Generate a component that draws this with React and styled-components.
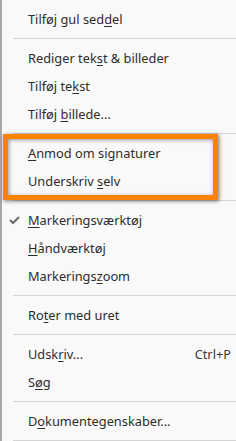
import React from "react";
import styled, { createGlobalStyle } from "styled-components";

const GlobalStyle = createGlobalStyle`
  html, body {
    margin: 0;
    padding: 0;
    background: #f9f9f9;
    overflow: hidden;
  }
`;

const Menu = styled.div`
  width: 236px;
  min-height: 441px;
  box-sizing: border-box;
  padding-top: 5px;
  background: #f9f9f9;
  border-left: 2px solid #a8a8a8;
  font-family: "Noto Sans", "Open Sans", sans-serif;
  font-size: 12.8px;
  color: #2d2d2d;
`;

const Item = styled.div`
  position: relative;
  display: flex;
  align-items: center;
  justify-content: space-between;
  height: 28px;
  padding: 0 5px 0 26px;
`;

const Key = styled.span`
  text-decoration: underline;
  text-underline-offset: 2px;
`;

const Shortcut = styled.span`
  color: #3a3a3a;
`;

const Separator = styled.div`
  height: 1px;
  margin: 5px 0 5px 11px;
  background: #d4d4d4;
`;

const Check = styled.svg`
  position: absolute;
  left: 7px;
  top: 50%;
  transform: translateY(-50%);
`;

const Highlight = styled.div`
  position: relative;

  &::after {
    content: "";
    position: absolute;
    left: 1px;
    right: 18px;
    top: -5px;
    bottom: -5px;
    border: 5px solid #fd8204;
    box-shadow: 1px 1px 4px rgba(0, 0, 0, 0.55),
      inset 1px 1px 4px rgba(0, 0, 0, 0.4);
    pointer-events: none;
  }
`;

// at = index of the access key letter in text
const Label = ({ text, at }) => (
  <span>
    {text.slice(0, at)}
    <Key>{text[at]}</Key>
    {text.slice(at + 1)}
  </span>
);

export default function App() {
  return (
    <>
      <GlobalStyle />
      <Menu>
        <Item>
          <Label text="Tilføj gul seddel" at={14} />
        </Item>
        <Separator />
        <Item>
          <Label text="Rediger tekst & billeder" at={11} />
        </Item>
        <Item>
          <Label text="Tilføj tekst" at={9} />
        </Item>
        <Item>
          <Label text="Tilføj billede..." at={7} />
        </Item>
        <Separator />
        <Highlight>
          <Item>
            <Label text="Anmod om signaturer" at={0} />
          </Item>
          <Item>
            <Label text="Underskriv selv" at={11} />
          </Item>
        </Highlight>
        <Separator />
        <Item>
          <Check width="11" height="9" viewBox="0 0 11 9">
            <polyline
              points="1,4.5 4,7.5 10,1.5"
              fill="none"
              stroke="#6a6a6a"
              strokeWidth="2"
            />
          </Check>
          <Label text="Markeringsværktøj" at={0} />
        </Item>
        <Item>
          <Label text="Håndværktøj" at={0} />
        </Item>
        <Item>
          <Label text="Markeringszoom" at={10} />
        </Item>
        <Separator />
        <Item>
          <Label text="Roter med uret" at={2} />
        </Item>
        <Separator />
        <Item>
          <Label text="Udskriv..." at={4} />
          <Shortcut>Ctrl+P</Shortcut>
        </Item>
        <Item>
          <Label text="Søg" at={1} />
        </Item>
        <Separator />
        <Item>
          <Label text="Dokumentegenskaber..." at={1} />
        </Item>
        <Separator />
      </Menu>
    </>
  );
}
